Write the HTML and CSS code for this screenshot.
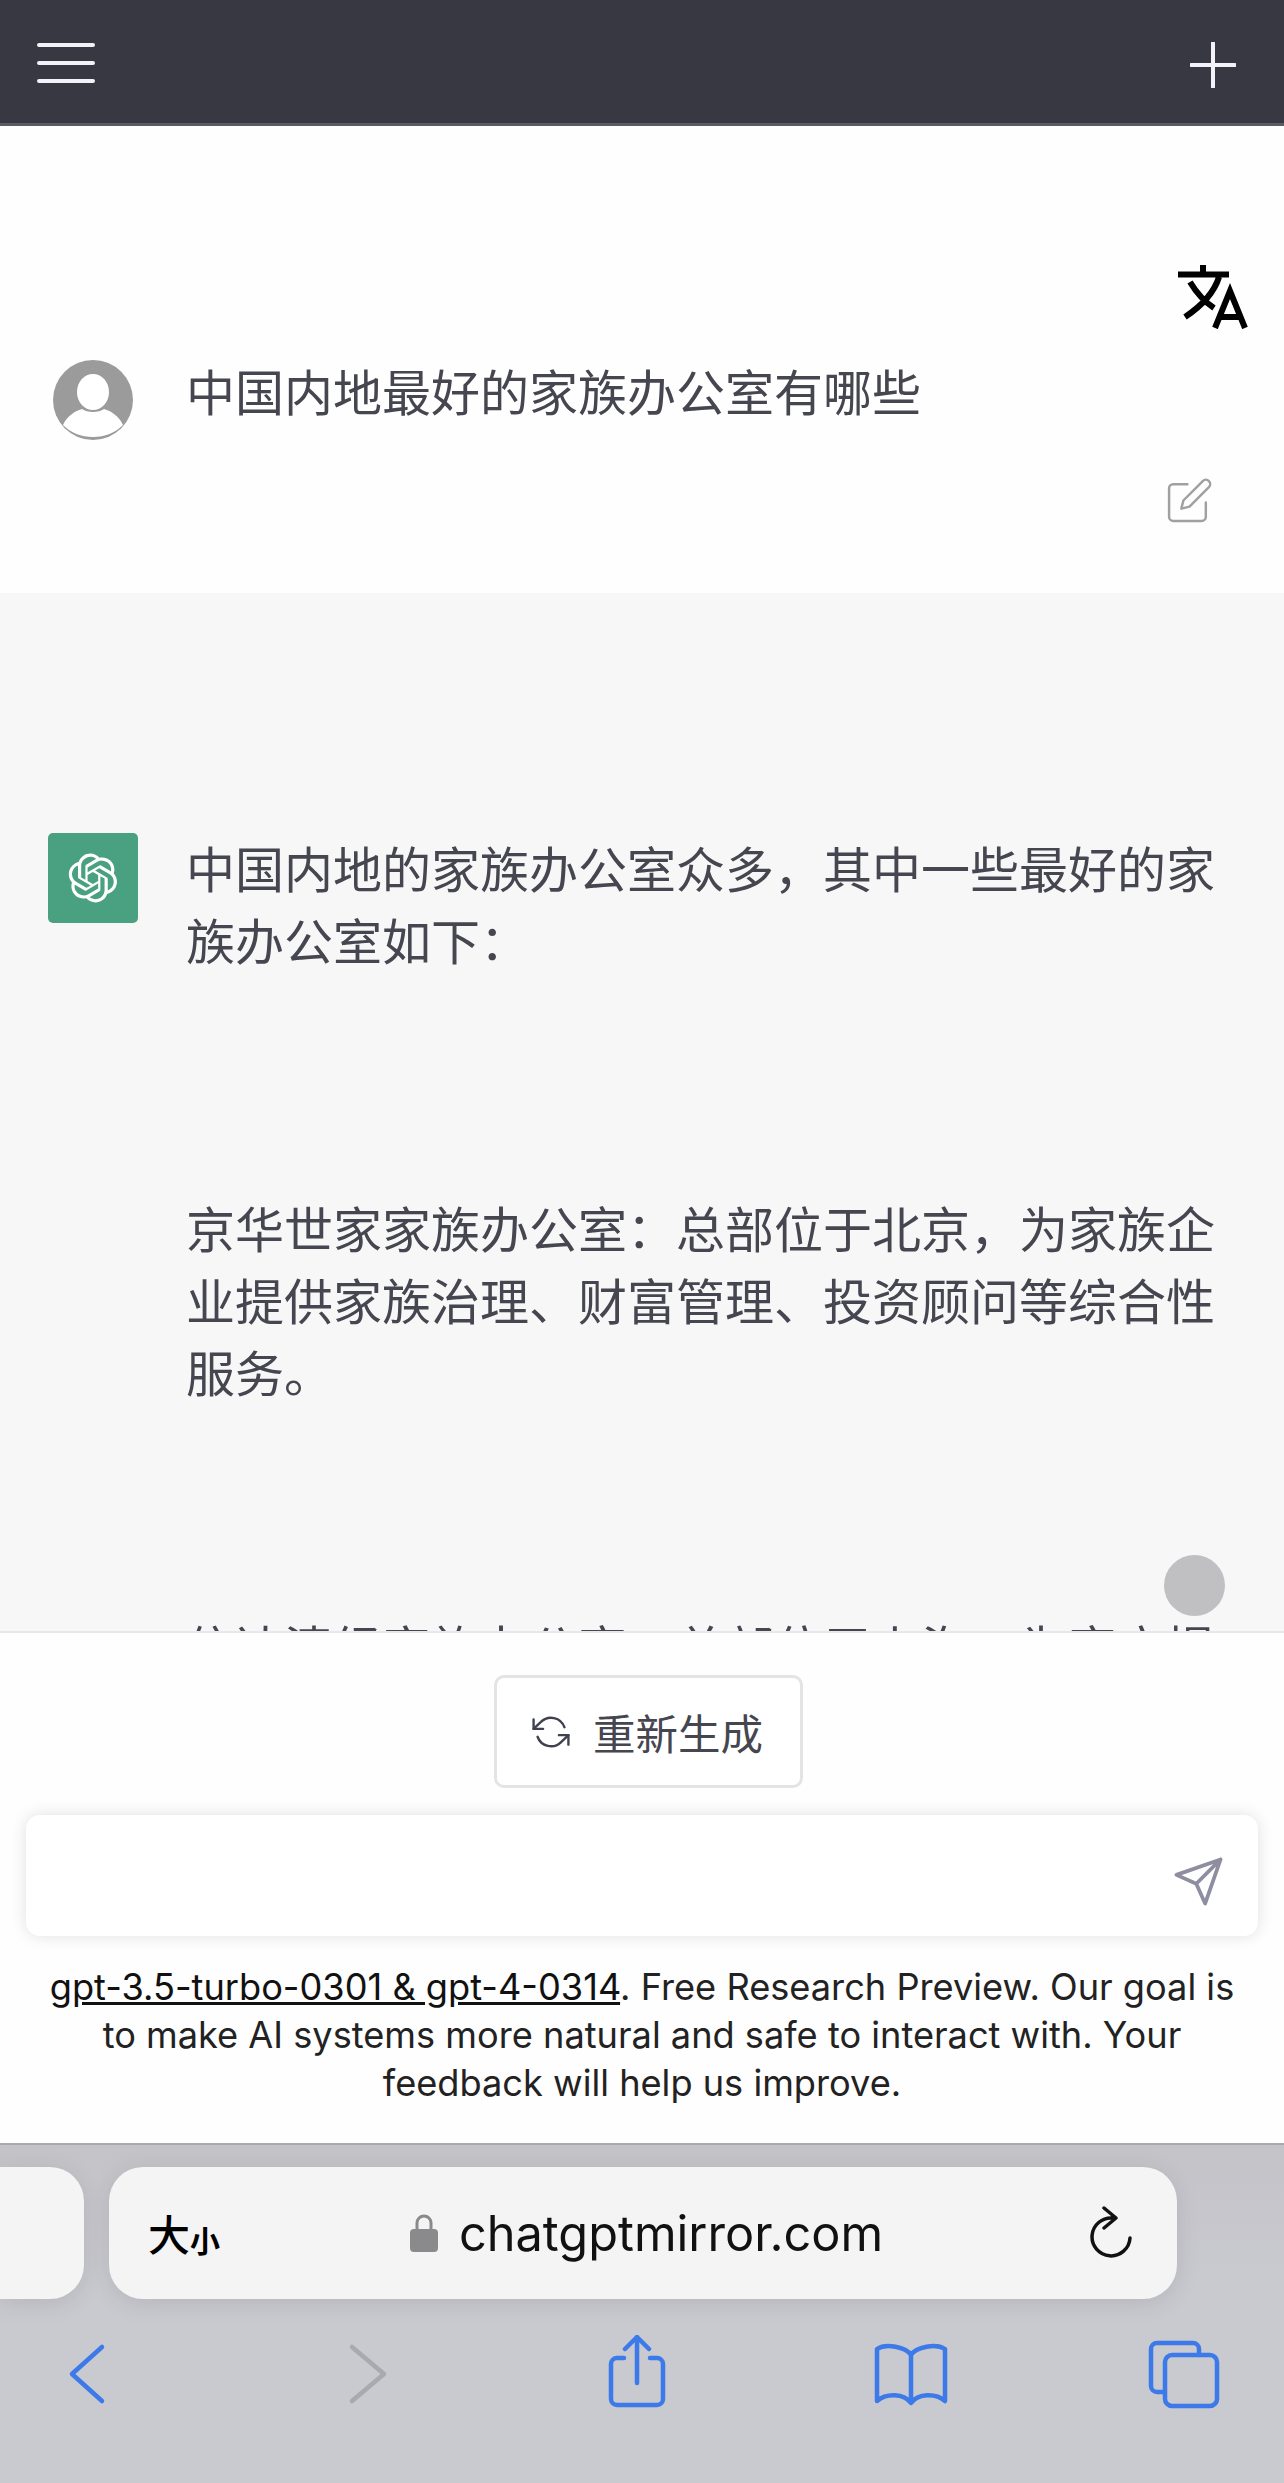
FILE: index.html
```html
<!DOCTYPE html>
<html lang="zh-CN">
	<head>
		<meta charset="UTF-8">
		<title>ChatGPT Mirror</title>
		<link rel="stylesheet" href="styles.css">
	</head>
	<body>
		<div class="topbar">
			<svg class="menu-icon" viewBox="0 0 58 40" width="58" height="40">
				<path d="M2 2H56M2 20H56M2 38H56"/>
			</svg>
			<svg class="new-icon" viewBox="0 0 46 46" width="46" height="46">
				<path d="M23 1V45M1 23H45"/>
			</svg>
		</div>

		<div class="question">
			<svg class="translate-btn" viewBox="0 0 70 64" width="70" height="64">
				<path class="thick" d="M0 9.5H51M25 0V9M41 12C36 28 22 42 7 52M12 17C18 27 27 37 36 43"/>
				<path class="thick" d="M37 63L52 26L67 63M42 52H62"/>
			</svg>
			<div class="msg-row">
				<svg class="avatar" viewBox="0 0 80 80" width="80" height="80">
					<circle cx="40" cy="40" r="40" fill="#9b9b9b"/>
					<ellipse cx="40" cy="32" rx="16" ry="18" fill="#fff"/>
					<path fill="#fff" d="M10 65C14 56 22 51 29 49C34 53 46 53 51 49C58 51 66 56 70 65C62 73 52 77 40 77C28 77 18 73 10 65Z"/>
				</svg>
				<p class="msg-text">中国内地最好的家族办公室有哪些</p>
			</div>
			<div class="msg-tools">
				<svg class="edit-icon" viewBox="0 0 24 24" width="49" height="49">
					<path d="M11 4H4a2 2 0 0 0-2 2v14a2 2 0 0 0 2 2h14a2 2 0 0 0 2-2v-7"/>
					<path d="M18.5 2.5a2.121 2.121 0 0 1 3 3L12 15l-4 1 1-4 9.5-9.5z"/>
				</svg>
			</div>
		</div>

		<div class="answer">
			<div class="msg-row">
				<div class="bot-icon">
					<svg viewBox="0 0 41 41" width="50" height="50">
						<path fill="#fff" d="M37.5324 16.8707C37.9808 15.5241 38.1363 14.0974 37.9886 12.6859C37.8409 11.2744 37.3934 9.91076 36.676 8.68622C35.6126 6.83404 33.9882 5.3676 32.0373 4.4985C30.0864 3.62941 27.9098 3.40259 25.8215 3.85078C24.8796 2.7893 23.7219 1.94125 22.4257 1.36341C21.1295 0.785575 19.7249 0.491269 18.3058 0.500197C16.1708 0.495044 14.0893 1.16803 12.3614 2.42214C10.6335 3.67624 9.34853 5.44666 8.6917 7.47815C7.30085 7.76286 5.98686 8.3414 4.8377 9.17505C3.68854 10.0087 2.73073 11.0782 2.02839 12.312C0.956464 14.1591 0.498905 16.2988 0.721698 18.4228C0.944492 20.5467 1.83612 22.5449 3.268 24.1293C2.81966 25.4759 2.66413 26.9026 2.81182 28.3141C2.95951 29.7256 3.40701 31.0892 4.12437 32.3138C5.18791 34.1659 6.8123 35.6322 8.76321 36.5013C10.7141 37.3704 12.8907 37.5973 14.9789 37.1492C15.9208 38.2107 17.0786 39.0587 18.3747 39.6366C19.6709 40.2144 21.0755 40.5087 22.4946 40.4998C24.6307 40.5054 26.7133 39.8321 28.4418 38.5772C30.1704 37.3223 31.4556 35.5506 32.1119 33.5179C33.5027 33.2332 34.8167 32.6547 35.9659 31.821C37.115 30.9874 38.0728 29.9178 38.7752 28.684C39.8458 26.8371 40.3023 24.6979 40.0789 22.5748C39.8556 20.4517 38.9639 18.4544 37.5324 16.8707ZM22.4978 37.8849C20.7443 37.8874 19.0459 37.2733 17.6994 36.1501C17.7601 36.117 17.8666 36.0586 17.936 36.0161L25.9004 31.4156C26.1003 31.3019 26.2663 31.137 26.3813 30.9378C26.4964 30.7386 26.5563 30.5124 26.5549 30.2825V19.0542L29.9213 20.998C29.9389 21.0068 29.9541 21.0198 29.9656 21.0359C29.977 21.052 29.9842 21.0707 29.9867 21.0902V30.3889C29.9842 32.375 29.1946 34.2791 27.7909 35.6841C26.3872 37.0892 24.4838 37.8806 22.4978 37.8849ZM6.39227 31.0064C5.51397 29.4888 5.19742 27.7107 5.49804 25.9832C5.55718 26.0187 5.66048 26.0818 5.73461 26.1244L13.699 30.7248C13.8975 30.8408 14.1233 30.902 14.3532 30.902C14.583 30.902 14.8088 30.8408 15.0073 30.7248L24.731 25.1103V28.9979C24.7321 29.0177 24.7283 29.0376 24.7199 29.0556C24.7115 29.0736 24.6988 29.0893 24.6829 29.1012L16.6317 33.7497C14.9096 34.7416 12.8643 35.0097 10.9447 34.4954C9.02506 33.9811 7.38785 32.7263 6.39227 31.0064ZM4.29707 13.6194C5.17156 12.0998 6.55279 10.9364 8.19885 10.3327C8.19885 10.4013 8.19491 10.5228 8.19491 10.6071V19.808C8.19351 20.0378 8.25334 20.2638 8.36823 20.4629C8.48312 20.6619 8.64893 20.8267 8.84863 20.9404L18.5723 26.5542L15.206 28.4979C15.1894 28.5089 15.1703 28.5155 15.1505 28.5173C15.1307 28.5191 15.1107 28.516 15.0924 28.5082L7.04046 23.8557C5.32135 22.8601 4.06716 21.2235 3.55289 19.3046C3.03862 17.3858 3.30624 15.3413 4.29707 13.6194ZM31.955 20.0556L22.2312 14.4411L25.5976 12.4981C25.6142 12.4872 25.6333 12.4805 25.6531 12.4787C25.6729 12.4769 25.6928 12.4801 25.7111 12.4879L33.7631 17.1364C34.9967 17.849 36.0017 18.8982 36.6606 20.1613C37.3194 21.4244 37.6047 22.849 37.4832 24.2684C37.3617 25.6878 36.8382 27.0432 35.9743 28.1759C35.1103 29.3086 33.9415 30.1717 32.6047 30.6641C32.6047 30.5947 32.6047 30.4733 32.6047 30.3889V21.188C32.6066 20.9586 32.5474 20.7328 32.4332 20.5338C32.319 20.3348 32.154 20.1698 31.955 20.0556ZM35.3055 15.0128C35.2464 14.9765 35.1431 14.9142 35.069 14.8717L27.1045 10.2712C26.906 10.1554 26.6803 10.0943 26.4504 10.0943C26.2206 10.0943 25.9948 10.1554 25.7963 10.2712L16.0726 15.8858V11.9982C16.0715 11.9783 16.0753 11.9585 16.0837 11.9405C16.0921 11.9225 16.1048 11.9068 16.1207 11.8949L24.1719 7.25025C25.4053 6.53903 26.8158 6.19376 28.2383 6.25482C29.6608 6.31589 31.0364 6.78077 32.2044 7.59508C33.3723 8.40939 34.2842 9.53945 34.8334 10.8531C35.3826 12.1667 35.5464 13.6095 35.3055 15.0128ZM14.2424 21.9419L10.8752 19.9981C10.8576 19.9893 10.8423 19.9763 10.8309 19.9602C10.8195 19.9441 10.8122 19.9254 10.8098 19.9058V10.6071C10.8107 9.18295 11.2173 7.78848 11.9819 6.58696C12.7466 5.38544 13.8377 4.42659 15.1275 3.82264C16.4173 3.21869 17.8524 2.99464 19.2649 3.1767C20.6775 3.35876 22.0089 3.93941 23.1034 4.85067C23.0427 4.88379 22.937 4.94215 22.8668 4.98473L14.9024 9.58517C14.7025 9.69878 14.5366 9.86356 14.4215 10.0626C14.3065 10.2616 14.2466 10.4877 14.2479 10.7175L14.2424 21.9419ZM16.071 17.9991L20.4018 15.4978L24.7325 17.9975V22.9985L20.4018 25.4983L16.071 22.9985V17.9991Z"/>
					</svg>
				</div>
				<div class="answer-body">
					<p>中国内地的家族办公室众多，其中一些最好的家族办公室如下：</p>
					<p class="item">京华世家家族办公室：总部位于北京，为家族企业提供家族治理、财富管理、投资顾问等综合性服务。</p>
					<p class="item-cut">信达清经家族办公室：总部位于上海，为客户提</p>
				</div>
			</div>
			<div class="scroll-dot"></div>
		</div>

		<div class="composer">
			<button class="regen-btn">
				<svg viewBox="0 0 24 24" width="38" height="38">
					<path d="M1 4v6h6M23 20v-6h-6"/>
					<path d="M20.49 9A9 9 0 0 0 5.64 5.64L1 10m22 4l-4.64 4.36A9 9 0 0 1 3.51 15"/>
				</svg>
				<span>重新生成</span>
			</button>
			<div class="input-box">
				<svg class="send-icon" viewBox="0 0 24 24" width="53" height="53">
					<path d="M22 2L15 22L11 13L2 9ZM22 2L11 13"/>
				</svg>
			</div>
			<p class="note"><a href="#">gpt-3.5-turbo-0301 &amp; gpt-4-0314</a>. Free Research Preview. Our goal is to make AI systems more natural and safe to interact with. Your feedback will help us improve.</p>
		</div>

		<div class="safari">
			<div class="url-row">
				<div class="prev-tab"></div>
				<div class="url-pill">
					<div class="text-size"><span class="big">大</span><span class="small">小</span></div>
					<div class="url-host">
						<svg viewBox="0 0 28 38" width="28" height="38">
							<path class="shackle" d="M7 17V9a7 7 0 0 1 14 0v8"/>
							<rect y="15" width="28" height="23" rx="4" fill="#8a8a8c"/>
						</svg>
						<span>chatgptmirror.com</span>
					</div>
					<svg class="reload" viewBox="0 0 44 54" width="44" height="54">
						<path d="M24 12A19 19 0 1 0 41 32M15 2L27 12L15 22"/>
					</svg>
				</div>
			</div>
			<div class="toolbar">
				<svg class="tool" viewBox="0 0 80 80" width="80" height="80"><path d="M55 12L25 39L55 66"/></svg>
				<svg class="tool off" viewBox="0 0 80 80" width="80" height="80"><path d="M24 12L56 39L24 66"/></svg>
				<svg class="tool" viewBox="0 0 80 80" width="80" height="80">
					<path d="M27 23H20a6 6 0 0 0-6 6V64a6 6 0 0 0 6 6H60a6 6 0 0 0 6-6V29a6 6 0 0 0-6-6H53"/>
					<path d="M40 48V2M28 14L40 2L52 14"/>
				</svg>
				<svg class="tool" viewBox="0 0 80 80" width="80" height="80">
					<path d="M40 20C35 12 15 8 6 14V66C15 58 33 58 40 68C47 58 65 58 74 66V14C65 8 45 12 40 20ZM40 20V66"/>
				</svg>
				<svg class="tool" viewBox="0 0 80 80" width="80" height="80">
					<path d="M20 57H14a6 6 0 0 1-6-6V14a6 6 0 0 1 6-6H50a6 6 0 0 1 6 6v6"/>
					<rect x="22" y="20" width="52" height="51" rx="7"/>
				</svg>
			</div>
		</div>
	</body>
</html>
```

FILE: styles.css
```css
* {
	box-sizing: border-box;
}

html, body {
	margin: 0;
	height: 2483px;
}

body {
	display: flex;
	flex-direction: column;
	overflow: hidden;
	font-family: 'Inter', 'Noto Sans CJK SC', sans-serif;
	background-color: #fefefe;
	color: #40414f;
}

p {
	margin: 0;
}

svg {
	display: block;
	flex-shrink: 0;
	fill: none;
}

.topbar {
	display: flex;
	align-items: center;
	justify-content: space-between;
	height: 126px;
	padding: 0 48px 0 37px;
	background-color: #383843;
	border-bottom: 3px solid #5a5a68;
}

.menu-icon {
	margin-top: 2px;
}

.new-icon {
	margin-top: 6px;
}

.menu-icon path, .new-icon path {
	stroke: #f2f2f8;
	stroke-width: 4;
	stroke-linecap: round;
}

.question {
	position: relative;
	height: 467px;
	padding-top: 228px;
	background-color: #fefefe;
}

.translate-btn {
	position: absolute;
	top: 139px;
	right: 36px;
}

.translate-btn .thick {
	stroke: #000;
	stroke-width: 6;
}

.msg-row {
	display: flex;
	align-items: flex-start;
	padding-left: 53px;
	gap: 53px;
}

.msg-text, .answer-body p {
	font-size: 49px;
	line-height: 72px;
	font-family: 'Noto Sans CJK SC', sans-serif;
	font-weight: 400;
	color: #45464f;
}

.avatar {
	margin-top: 6px;
}

.msg-tools {
	display: flex;
	justify-content: flex-end;
	margin-top: 36px;
	padding-right: 70px;
}

.edit-icon path {
	stroke: #a0a0a0;
	stroke-width: 1.2;
	stroke-linecap: round;
	stroke-linejoin: round;
}

.answer {
	position: relative;
	height: 1038px;
	padding-top: 240px;
	overflow: hidden;
	background-color: #f7f7f8;
}

.answer .msg-row {
	padding-left: 48px;
	gap: 48px;
}

.bot-icon {
	display: flex;
	align-items: center;
	justify-content: center;
	flex-shrink: 0;
	width: 90px;
	height: 90px;
	border-radius: 5px;
	background-color: #4aa181;
}

.answer-body {
	width: 1040px;
	margin-top: -2px;
}

.answer-body .item {
	margin-top: 216px;
}

.answer-body .item-cut {
	margin-top: 203px;
}

.scroll-dot {
	position: absolute;
	left: 1164px;
	top: 962px;
	width: 61px;
	height: 61px;
	border-radius: 50%;
	background-color: #c0c0c2;
}

.composer {
	height: 512px;
	padding-top: 42px;
	background-color: #fefefe;
	border-top: 2px solid #e8e8ea;
}

.regen-btn {
	display: flex;
	align-items: center;
	gap: 23px;
	width: 309px;
	height: 113px;
	margin-left: 494px;
	padding: 0 0 0 35px;
	font-family: 'Noto Sans CJK SC', sans-serif;
	font-size: 42.5px;
	font-weight: 400;
	color: #45464f;
	background-color: #fff;
	border: 3px solid #e4e4e7;
	border-radius: 10px;
}

.regen-btn path {
	stroke: #40414f;
	stroke-width: 1.5;
	stroke-linecap: round;
	stroke-linejoin: round;
}

.input-box {
	display: flex;
	align-items: flex-end;
	justify-content: flex-end;
	height: 121px;
	margin: 27px 26px 0;
	padding: 0 33px 28px 0;
	background-color: #fff;
	border-radius: 14px;
	box-shadow: 0 0 16px rgba(0, 0, 0, 0.12);
}

.send-icon path {
	stroke: #8e8ea0;
	stroke-width: 1.7;
	stroke-linecap: round;
	stroke-linejoin: round;
}

.note {
	margin-top: 27px;
	padding: 0 37px;
	font-size: 36.2px;
	line-height: 48px;
	text-align: center;
	color: #222;
}

.note a {
	color: #111;
}

.safari {
	flex-grow: 1;
	padding-top: 22px;
	background: linear-gradient(#c3c3c8, #c9c9d0 40%);
	border-top: 2px solid #a9a9ad;
}

.url-row {
	display: flex;
	gap: 25px;
}

.prev-tab {
	width: 84px;
	height: 132px;
	background-color: #f4f4f5;
	border-radius: 0 34px 34px 0;
	box-shadow: 0 4px 24px rgba(0, 0, 0, 0.1);
}

.url-pill {
	display: flex;
	align-items: center;
	justify-content: space-between;
	width: 1068px;
	height: 132px;
	padding: 0 44px 0 39px;
	background-color: #f4f4f5;
	border-radius: 34px;
	box-shadow: 0 4px 24px rgba(0, 0, 0, 0.1);
}

.text-size {
	display: flex;
	align-items: flex-end;
	font-family: 'Noto Sans CJK SC', sans-serif;
	font-weight: 500;
	color: #000;
	line-height: 1;
}

.text-size .big {
	font-size: 42px;
}

.text-size .small {
	font-size: 30px;
	font-weight: 700;
}

.url-host {
	display: flex;
	align-items: center;
	gap: 21px;
	margin-right: 16px;
	font-size: 48.7px;
	color: #111;
}

.shackle {
	stroke: #8a8a8c;
	stroke-width: 3;
}

.reload path {
	stroke: #111;
	stroke-width: 3.5;
	stroke-linecap: round;
	stroke-linejoin: round;
}

.toolbar {
	display: grid;
	grid-template-columns: 281px 269px 274px 272px 80px;
	margin-top: 36px;
	padding-left: 47px;
}

.tool path, .tool rect {
	stroke: #3b7ae8;
	stroke-width: 4.5;
	stroke-linecap: round;
	stroke-linejoin: round;
}

.tool.off path {
	stroke: #a9a9ae;
}
```
